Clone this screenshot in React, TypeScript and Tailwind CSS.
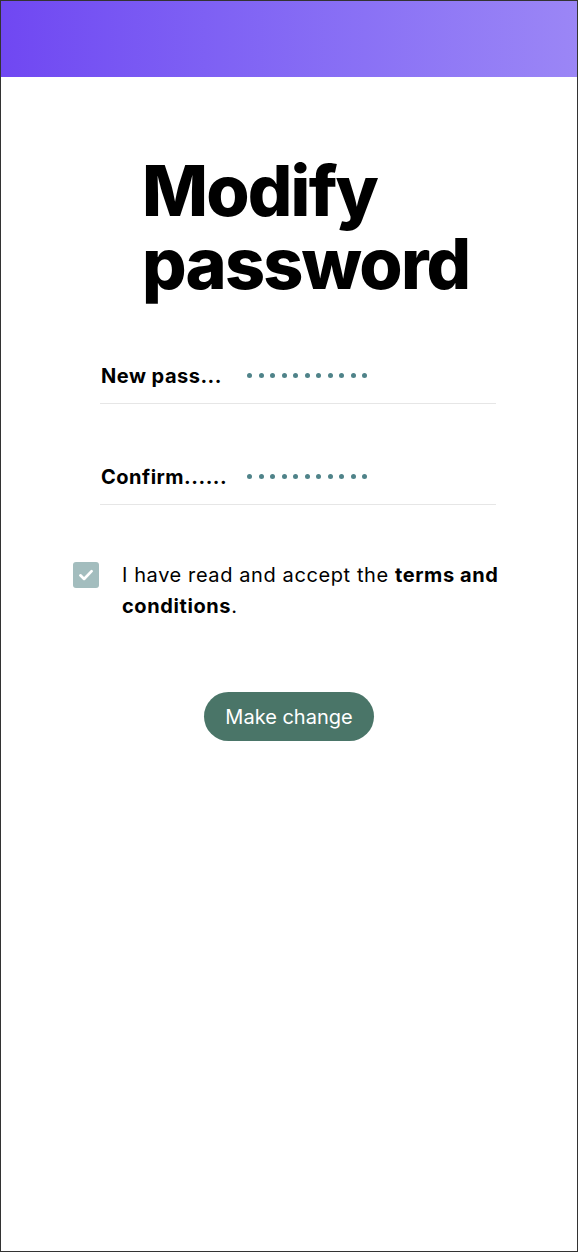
import React from "react";

const dots = Array.from( { length: 11 } );

function PasswordRow( { label }: { label: string } ) {
  return (
    <div className="flex items-center h-[56px] border-b border-[#e6e6e6]">
      <span className="w-[147px] pl-px text-[20px] font-bold text-black tracking-[0.5px]">{ label }</span>
      <div className="flex gap-[6.5px]">
        { dots.map( ( _, i ) => (
          <span key={ i } className="block w-[5px] h-[5px] rounded-full bg-[#4f8389]"/>
        ) ) }
      </div>
    </div>
  );
}

export default function App() {
  return (
    <div
      className="w-[578px] h-[1252px] border border-[#333] bg-white flex flex-col"
      style={ { fontFamily: "Inter, 'Noto Sans', sans-serif" } }
    >
      <div className="h-[76px] bg-gradient-to-r from-[#7047f2] to-[#9b86f6]"/>

      <h1 className="mt-[77px] pl-[141px] text-[70px] leading-[73px] font-extrabold text-black tracking-[-1.8px]">
        Modify
        <br/>
        password
      </h1>

      <div className="mt-[48px] ml-[99px] w-[396px] flex flex-col gap-[45px]">
        <PasswordRow label="New pass..."/>
        <PasswordRow label="Confirm......"/>
      </div>

      <div className="mt-[55px] pl-[72px] pr-[60px] flex items-start gap-[23px]">
        <div className="mt-[2px] w-[26px] h-[26px] shrink-0 rounded-[3px] bg-[#a3bdbe] flex items-center justify-center">
          <svg width="18" height="18" viewBox="0 0 16 16" fill="none">
            <path d="M3 8.3l3.3 3.2L13 4.6" stroke="white" strokeWidth="2.4" strokeLinecap="round" strokeLinejoin="round"/>
          </svg>
        </div>
        <p className="text-[20px] leading-[31px] text-black tracking-[0.6px]">
          I have read and accept the <span className="font-bold">terms and conditions</span>.
        </p>
      </div>

      <div className="mt-[70px] flex justify-center">
        <button className="w-[170px] h-[49px] rounded-full bg-[#4a7568] text-white text-[20px]">
          Make change
        </button>
      </div>
    </div>
  );
}
